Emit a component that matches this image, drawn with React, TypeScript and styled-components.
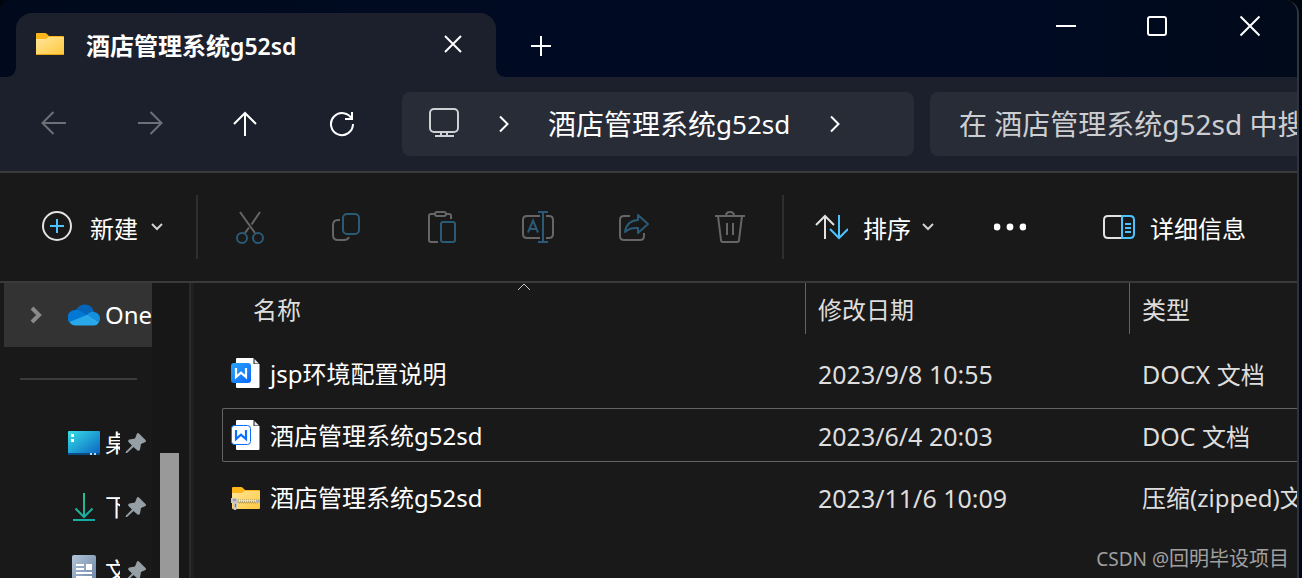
import React from "react";
import styled, { createGlobalStyle, css } from "styled-components";

const GlobalStyle = createGlobalStyle`
  * { box-sizing: border-box; }
  html, body { margin: 0; height: 100%; background: #00081a; overflow: hidden; }
  body, button, input {
    font-family: "Noto Sans", "Noto Sans CJK SC", sans-serif;
    color: #ffffff;
  }
  button { background: none; border: 0; padding: 0; margin: 0; display: flex; align-items: center; }
  svg { display: block; flex: none; }
`;

const Desktop = styled.div`
  height: 100vh;
  padding-right: 3px;
  background: linear-gradient(#00060f, #00081c);
`;

const Window = styled.main`
  position: relative;
  height: 100%;
  display: flex;
  flex-direction: column;
  overflow: hidden;
  background: #191919;
  border-right: 2px solid #2f333c;
  border-radius: 12px 14px 0 0;
`;

const TitleBar = styled.header`
  display: flex;
  align-items: flex-end;
  height: 77px;
  flex: none;
  padding-left: 16px;
  background: linear-gradient(90deg, #000a1c, #000a22 40%, #000a22 80%, #000a1a);
`;

const Tab = styled.div`
  position: relative;
  display: flex;
  align-items: center;
  width: 480px;
  height: 64px;
  padding: 0 33px 2px 20px;
  border-radius: 16px 16px 0 0;
  background: #1b202c;
  &::before, &::after {
    content: "";
    position: absolute;
    bottom: 0;
    width: 8px;
    height: 8px;
  }
  &::before {
    left: -8px;
    background: radial-gradient(circle at 0 0, transparent 7px, #1b202c 8px);
  }
  &::after {
    right: -8px;
    background: radial-gradient(circle at 100% 0, transparent 7px, #1b202c 8px);
  }
`;

const TabTitle = styled.h1`
  flex: 1;
  margin: 0 0 0 22px;
  padding-top: 3px;
  font-size: 24px;
  line-height: 32px;
  font-weight: 700;
  white-space: nowrap;
`;

const Latin = styled.span<{ $size: number; $weight?: number }>`
  font-size: ${(p) => p.$size}px;
  font-weight: ${(p) => p.$weight ?? 400};
`;

const NewTab = styled.button`
  align-self: center;
  padding: 14px 0 0 34px;
`;

const Controls = styled.div`
  display: flex;
  align-self: flex-start;
  gap: 70px;
  margin-left: auto;
  padding: 15px 36px 0 0;
`;

const NavBar = styled.nav`
  display: flex;
  align-items: center;
  flex: none;
  height: 96px;
  padding-left: 38px;
  background: #1b202c;
  border-bottom: 2px solid #3a3a3d;
`;

const NavButtons = styled.div`
  display: flex;
  gap: 64px;
  margin-right: 44px;
`;

const field = css`
  height: 64px;
  border-radius: 8px;
  background: #272c37;
`;

const AddressBar = styled.div`
  ${field}
  display: flex;
  align-items: center;
  flex: 1;
  min-width: 0;
  padding-left: 26px;
`;

const Crumb = styled.button`
  margin: 0 40px 0 39px;
  font-size: 28px;
  line-height: 40px;
  white-space: nowrap;
`;

const CrumbArrow = styled.span`
  margin-left: 39px;
`;

const SearchBox = styled.input`
  ${field}
  flex: none;
  width: 367px;
  margin-left: 16px;
  padding: 0 0 0 29px;
  border: 0;
  border-radius: 8px 0 0 8px;
  outline: 0;
  font-size: 28px;
  &::placeholder { color: #cdced1; opacity: 1; }
`;

const Toolbar = styled.div`
  display: flex;
  align-items: center;
  flex: none;
  height: 110px;
  padding: 0 51px 0 40px;
  border-bottom: 2px solid #3a3a3a;
`;

const ToolSection = styled.div<{ $before?: number; $after?: number }>`
  margin: 0 ${(p) => p.$after ?? 0}px 0 ${(p) => p.$before ?? 0}px;
`;

const DetailsArea = styled.div`
  margin-left: auto;
`;

const LabelButton = styled.button<{ $gap: number }>`
  gap: ${(p) => p.$gap}px;
  font-size: 24px;
  line-height: 36px;
  white-space: nowrap;
`;

const ButtonText = styled.span`
  padding-top: 3px;
`;

const Chevron = styled.span`
  margin-left: -4px;
`;

const Rule = styled.span`
  width: 2px;
  height: 64px;
  background: #2e2e2e;
`;

const IconGroup = styled.div`
  display: flex;
  gap: 62px;
  margin: 0 35px;
`;

const Body = styled.div`
  display: flex;
  flex: 1;
  min-height: 0;
`;

const Sidebar = styled.aside`
  display: flex;
  flex: none;
  width: 194px;
  padding-left: 4px;
  border-right: 3px solid #1f1f1f;
  background: #191919;
  overflow: hidden;
`;

const Tree = styled.div`
  width: 148px;
  overflow: hidden;
  font-size: 24px;
  line-height: 36px;
`;

const CloudItem = styled.a`
  display: flex;
  align-items: center;
  height: 64px;
  padding-left: 25px;
  background: #333333;
  color: #ffffff;
  text-decoration: none;
  white-space: nowrap;
`;

const CloudIcon = styled.span`
  margin: 0 5px 0 25px;
`;

const Divider = styled.hr`
  width: 117px;
  height: 2px;
  margin: 31px 0 31px 16px;
  border: 0;
  background: #3c3c3c;
`;

const PinnedItem = styled.a`
  display: flex;
  align-items: center;
  height: 64px;
  padding-left: 64px;
  color: #ffffff;
  text-decoration: none;
`;

const PinnedName = styled.span`
  width: 15px;
  margin: 0 5px;
  overflow: hidden;
  white-space: nowrap;
`;

const ScrollTrack = styled.div`
  display: flex;
  flex: 1;
  padding: 170px 0 0 8px;
  background: #171717;
  border-right: 2px solid #2a2a2a;
`;

const ScrollThumb = styled.div`
  width: 19px;
  background: #999999;
`;

const Files = styled.section`
  flex: 1;
  min-width: 0;
  padding-left: 28px;
  overflow: hidden;
`;

const Table = styled.table`
  width: 100%;
  table-layout: fixed;
  border-collapse: separate;
  border-spacing: 0;
  font-size: 24px;
  line-height: 36px;
  white-space: nowrap;
`;

const Head = styled.th<{ $divided?: boolean; $width?: string }>`
  position: relative;
  width: ${(p) => p.$width ?? "auto"};
  height: 51px;
  padding: 2px 0 0 ${(p) => (p.$divided ? 12 : 31)}px;
  border-left: ${(p) => (p.$divided ? "1px solid #636363" : "0")};
  text-align: left;
  font-weight: 400;
  color: #dedede;
`;

const SortMark = styled.span`
  position: absolute;
  inset: 0 0 auto 20px;
  display: flex;
  justify-content: center;
`;

const Gap = styled.tr`
  height: 12px;
`;

const Spacer = styled.tr`
  height: 8px;
`;

const Cell = styled.td<{ $selected?: boolean; $size?: number }>`
  height: 54px;
  padding: 2px 0 0 13px;
  overflow: hidden;
  font-size: ${(p) => p.$size ?? 24}px;
  color: #dedede;
  border: 0 solid ${(p) => (p.$selected ? "#636363" : "transparent")};
  border-width: 1px 0;
  &:first-child {
    padding-left: 8px;
    border-left-width: 1px;
    border-radius: 2px 0 0 2px;
    color: #ffffff;
  }
`;

const FileName = styled.span`
  display: flex;
  align-items: center;
  gap: 9px;
`;

const Watermark = styled.p`
  position: absolute;
  right: 8px;
  bottom: 4px;
  margin: 0;
  font-size: 20px;
  line-height: 30px;
  color: #a0a0a0;
  white-space: nowrap;
`;

const GREY = "#666666";
const TEAL = "#2a5a75";
const BLUE = "#4cc2ff";

type IconProps = { w: number; h: number; color?: string; sw?: number; children: React.ReactNode };

const Icon = ({ w, h, color = "#ffffff", sw = 2, children }: IconProps) => (
  <svg width={w} height={h} viewBox={`0 0 ${w} ${h}`} fill="none" stroke={color} strokeWidth={sw} aria-hidden="true">
    {children}
  </svg>
);

const FolderIcon = () => (
  <svg width="28" height="24" viewBox="0 0 28 24" aria-hidden="true">
    <defs>
      <linearGradient id="folder" x1="0" y1="0" x2="1" y2="1">
        <stop offset="0" stopColor="#ffe69c" />
        <stop offset="1" stopColor="#ffc83a" />
      </linearGradient>
    </defs>
    <path d="M0 2Q0 1 1 1H9Q10 1 11 2L13 4H27Q28 4 28 5V12H0Z" fill="#fcb51a" />
    <path d="M0 7H10L12.5 5H28V22Q28 23 27 23H1Q0 23 0 22Z" fill="url(#folder)" />
    <path d="M0 21.5V22Q0 23 1 23H27Q28 23 28 22V21.5Q28 22 27 22H1Q0 22 0 21.5Z" fill="#e9a416" />
  </svg>
);

const ZipIcon = () => (
  <svg width="30" height="32" viewBox="0 0 30 32" aria-hidden="true">
    <g transform="translate(0 4)">
      <path d="M1 2Q1 1 2 1H10Q11 1 12 2L14 4H28Q29 4 29 5V12H1Z" fill="#fcb51a" />
      <path d="M1 7H11L13.5 5H29V22Q29 23 28 23H2Q1 23 1 22Z" fill="url(#folder)" />
      <path d="M7 14H28M8 17H28" stroke="#a39468" strokeDasharray="1 1" />
      <path d="M7 15H28" stroke="#f4efdf" />
      <path d="M7 16H28" stroke="#6f6a5c" strokeDasharray="1 1" />
      <rect x="25" y="14" width="4" height="3" fill="#b4b4b4" />
      <path d="M0 12H5L7 14V17H6V22L5 24H3L2 22V17H0Z" fill="#c5c5c3" />
      <path d="M2 14H5M4.500 18V21" stroke="#77736c" />
    </g>
  </svg>
);

const DocIcon = ({ solid }: { solid?: boolean }) => (
  <svg width="30" height="32" viewBox="0 0 30 32" aria-hidden="true">
    <defs>
      <linearGradient id="docx" x1="0" y1="0" x2="1" y2="1">
        <stop offset="0" stopColor="#2ba5fb" />
        <stop offset="1" stopColor="#0968fb" />
      </linearGradient>
    </defs>
    <path d="M5 1Q5 0 6 0H22.5V6H28.5V29Q28.5 30 27.500 30H6Q5 30 5 29Z" fill="#ffffff" />
    <path d="M23.5 1L28 5.500H23.5Z" fill="#e7eaf2" />
    {solid ? (
      <rect x="0" y="5" width="20" height="20" rx="3" fill="url(#docx)" />
    ) : (
      <rect x="0.5" y="5.5" width="19" height="19" rx="3" fill="#ffffff" stroke="#0d6efd" />
    )}
    <path
      d="M5 10V19L10 14.6L15 19V10"
      fill="none"
      stroke={solid ? "#ffffff" : "#0d6efd"}
      strokeWidth="2.2"
    />
  </svg>
);

const ChevronRight = () => (
  <Icon w={10} h={18}><path d="M1 1.5L8.5 9L1 16.5" /></Icon>
);

const ChevronDown = () => (
  <Icon w={12} h={8} color="#d0d0d0"><path d="M1 1L6 6L11 1" /></Icon>
);

const CloudLogo = () => (
  <svg width="32" height="22" viewBox="0 0 32 22" aria-hidden="true">
    <path d="M7 8C9 3 12.5 0.5 17 0.5C21.5 0.5 25 3.5 26 8L19 13Z" fill="#0364b8" />
    <path d="M7 21A7.5 7.5 0 0 1 7 6Q9.500 5.500 11.5 6.5L20 11.5L8 21Z" fill="#0078d4" />
    <path d="M19 11C21 8 24 7.5 26 8C29.5 8.5 32 11 32 14.5C32 16 31.5 17.5 31 18Z" fill="#1490df" />
    <path d="M1.500 18L19.3 10.8L31 18C30 20.5 28 21.5 25.5 21.5H7.5C5 21.5 3 20.500 1.500 18Z" fill="#28a8ea" />
  </svg>
);

const DesktopIcon = () => (
  <svg width="32" height="24" viewBox="0 0 32 24" aria-hidden="true">
    <defs>
      <linearGradient id="desk" x1="0" y1="0" x2="1" y2="1">
        <stop offset="0" stopColor="#37dfe8" />
        <stop offset="1" stopColor="#0a61c0" />
      </linearGradient>
    </defs>
    <rect width="32" height="24" rx="1" fill="url(#desk)" />
    <path d="M0 22H32V23Q32 24 31 24H1Q0 24 0 23Z" fill="#0b4b83" />
    <path d="M3 3H6V6H3ZM3 8H6V11H3Z" fill="#ffffff" />
    <path d="M22 22H24V24H22ZM26 22H28V24H26Z" fill="#b9d8ef" />
  </svg>
);

const DownloadIcon = () => (
  <svg width="32" height="28" viewBox="0 0 32 28" fill="none" strokeWidth="2" aria-hidden="true">
    <defs>
      <linearGradient id="down" gradientUnits="userSpaceOnUse" x1="5" y1="0" x2="27" y2="28">
        <stop offset="0" stopColor="#33c481" />
        <stop offset="1" stopColor="#0fa3ac" />
      </linearGradient>
    </defs>
    <path d="M16 0V24M7.5 15.5L16 24L24.5 15.5M5 27H27" stroke="url(#down)" />
  </svg>
);

const DocumentsIcon = () => (
  <svg width="32" height="32" viewBox="0 0 32 32" aria-hidden="true">
    <defs>
      <linearGradient id="docs" x1="0" y1="0" x2="1" y2="1">
        <stop offset="0" stopColor="#b3c5d9" />
        <stop offset="1" stopColor="#6580a1" />
      </linearGradient>
    </defs>
    <rect x="4" width="24" height="32" rx="2" fill="url(#docs)" />
    <path d="M8 10H16M8 14H16M8 18H24M8 22H24" stroke="#ffffff" strokeWidth="2" />
    <rect x="18" y="9" width="6" height="6" fill="#ffffff" />
  </svg>
);

const PinIcon = () => (
  <svg width="22" height="22" viewBox="0 0 22 22" aria-hidden="true">
    <path d="M12 1.5Q13 0.5 14 1.5L20.5 8Q21.5 9 20.5 10L16 12L15 17.5Q14 19.5 12.5 18.5L8.5 15L2 21L0.5 21L1 19.5L7 13.5L3.5 10Q2.5 8 4.5 7.5L10 6.5Z" fill="#959fa6" />
  </svg>
);

const pinned = [
  { name: "桌面", icon: <DesktopIcon /> },
  { name: "下载", icon: <DownloadIcon /> },
  { name: "文档", icon: <DocumentsIcon /> },
];

const files = [
  { name: "jsp环境配置说明", date: "2023/9/8 10:55", type: <><Latin $size={25}>DOCX </Latin>文档</>, icon: <DocIcon solid /> },
  { name: "酒店管理系统g52sd", date: "2023/6/4 20:03", type: <><Latin $size={25}>DOC </Latin>文档</>, icon: <DocIcon />, selected: true },
  { name: "酒店管理系统g52sd", date: "2023/11/6 10:09", type: "压缩(zipped)文件夹", icon: <ZipIcon /> },
];

export default function App() {
  return (
    <Desktop>
      <GlobalStyle />
      <Window>
        <TitleBar>
          <Tab>
            <FolderIcon />
            <TabTitle>酒店管理系统<Latin $size={23} $weight={600}>g52sd</Latin></TabTitle>
            <button aria-label="关闭标签页">
              <Icon w={20} h={20}><path d="M2 2L18 18M18 2L2 18" /></Icon>
            </button>
          </Tab>
          <NewTab aria-label="新建标签页">
            <Icon w={22} h={22}><path d="M11 1V21M1 11H21" /></Icon>
          </NewTab>
          <Controls>
            <button aria-label="最小化"><Icon w={22} h={22}><path d="M1 11H21" /></Icon></button>
            <button aria-label="最大化"><Icon w={22} h={22}><rect x="1" y="2" width="18" height="18" rx="2" /></Icon></button>
            <button aria-label="关闭"><Icon w={22} h={22}><path d="M1.5 1.5L20.5 20.5M20.5 1.5L1.5 20.5" /></Icon></button>
          </Controls>
        </TitleBar>

        <NavBar>
          <NavButtons>
            <button aria-label="后退"><Icon w={32} h={26} color="#6c7078"><path d="M28 12H5M15.5 1L4.5 12L15.5 23" /></Icon></button>
            <button aria-label="前进"><Icon w={32} h={26} color="#6c7078"><path d="M4 12H27M16.5 1L27.5 12L16.5 23" /></Icon></button>
            <button aria-label="向上"><Icon w={32} h={26}><path d="M15 25V2M4 13L15 2L26 13" /></Icon></button>
            <button aria-label="刷新"><Icon w={32} h={26}><path d="M26 8.500A11 11 0 1 0 27 13M26 1V8H19" /></Icon></button>
          </NavButtons>
          <AddressBar>
            <Icon w={32} h={32} color="#cfd0d3">
              <rect x="2" y="1" width="28" height="23" rx="4" />
              <path d="M13 24V28M19 24V28M7 28H26" />
            </Icon>
            <CrumbArrow><ChevronRight /></CrumbArrow>
            <Crumb>酒店管理系统<Latin $size={26}>g52sd</Latin></Crumb>
            <ChevronRight />
          </AddressBar>
          <SearchBox aria-label="搜索" placeholder="在 酒店管理系统g52sd 中搜索" />
        </NavBar>

        <Toolbar>
          <ToolSection $after={33}>
            <LabelButton $gap={17}>
              <Icon w={33} h={32} color="#e2e2e2">
                <circle cx="17" cy="15" r="14" />
                <path d="M10 15H24M17 8V22" stroke={BLUE} />
              </Icon>
              <ButtonText>新建</ButtonText>
              <Chevron><ChevronDown /></Chevron>
            </LabelButton>
          </ToolSection>
          <Rule />
          <IconGroup>
            <button aria-label="剪切">
              <Icon w={34} h={34} color={GREY}>
                <path d="M7 2L22 23M27 2L18.5 14.5M16 17.5L12 23" />
                <circle cx="9" cy="28" r="5" stroke={TEAL} />
                <circle cx="25" cy="28" r="5" stroke={TEAL} />
              </Icon>
            </button>
            <button aria-label="复制">
              <Icon w={34} h={34} color={GREY}>
                <path d="M11 10H9Q4 10 4 15V25Q4 30 9 30H15Q19 30 20 27" />
                <rect x="14" y="4" width="16" height="20" rx="4" stroke={TEAL} />
              </Icon>
            </button>
            <button aria-label="粘贴">
              <Icon w={34} h={34} color={GREY}>
                <path d="M13 32H6Q4 32 4 30V6Q4 4 6 4H10M21 4H24Q26 4 26 6V9" />
                <rect x="10" y="2" width="11" height="4" rx="2" />
                <rect x="16" y="12" width="14" height="20" rx="2" stroke={TEAL} />
              </Icon>
            </button>
            <button aria-label="重命名">
              <Icon w={34} h={34} color={GREY}>
                <path d="M19 6H6Q2 6 2 10V24Q2 28 6 28H19M25 6H28Q32 6 32 10V24Q32 28 28 28H25" />
                <path d="M7 22.5L12 10.5L17 22.5M9 19H15M22 2V32M17 2H27M17 32H27" stroke={TEAL} />
              </Icon>
            </button>
            <button aria-label="共享">
              <Icon w={34} h={34} color={GREY}>
                <path d="M13 6H7Q3 6 3 10V26Q3 30 7 30H23Q27 30 27 26V23" />
                <path d="M21 5L31 14L21 23V18C15 17.5 11 19 8 22C9 15 13 10.5 21 10Z" stroke={TEAL} strokeLinejoin="round" />
              </Icon>
            </button>
            <button aria-label="删除">
              <Icon w={34} h={34} color={GREY}>
                <path d="M2 6H32M5 6L8 30Q8 32 10 32H24Q26 32 26 30L29 6M13 6Q13 2 17 2Q21 2 21 6M14 13V25M20 13V25" />
              </Icon>
            </button>
          </IconGroup>
          <Rule />
          <ToolSection $before={31} $after={60}>
            <LabelButton $gap={15}>
              <Icon w={33} h={28} color="#e2e2e2">
                <path d="M10 26V3M1 12L10 3L19 12" />
                <path d="M24 2V25M15 16L24 25L33 16" stroke={BLUE} />
              </Icon>
              <ButtonText>排序</ButtonText>
              <Chevron><ChevronDown /></Chevron>
            </LabelButton>
          </ToolSection>
          <button aria-label="更多">
            <Icon w={32} h={8}>
              <g fill="#ffffff" stroke="none">
                <circle cx="3" cy="4" r="3.4" />
                <circle cx="16" cy="4" r="3.4" />
                <circle cx="29" cy="4" r="3.4" />
              </g>
            </Icon>
          </button>
          <DetailsArea>
            <LabelButton $gap={15}>
              <Icon w={32} h={24} color="#e2e2e2">
                <path d="M19 1H5Q1 1 1 5V19Q1 23 5 23H19" />
                <path d="M19 1H27Q31 1 31 5V19Q31 23 27 23H19ZM22 9H28M22 13H28M22 17H28" stroke={BLUE} />
              </Icon>
              <ButtonText>详细信息</ButtonText>
            </LabelButton>
          </DetailsArea>
        </Toolbar>

        <Body>
          <Sidebar>
            <Tree>
              <CloudItem href="#onedrive">
                <Icon w={14} h={18} color="#8a8a8a" sw={4}><path d="M3 2L10 9L3 16" /></Icon>
                <CloudIcon><CloudLogo /></CloudIcon>
                OneDrive
              </CloudItem>
              <Divider />
              {pinned.map((item) => (
                <PinnedItem key={item.name} href={`#${item.name}`}>
                  {item.icon}
                  <PinnedName>{item.name}</PinnedName>
                  <PinIcon />
                </PinnedItem>
              ))}
            </Tree>
            <ScrollTrack><ScrollThumb /></ScrollTrack>
          </Sidebar>
          <Files>
            <Table>
              <thead>
                <tr>
                  <Head>
                    名称
                    <SortMark><Icon w={14} h={8} color="#c8c8c8" sw={1}><path d="M1 7L7 1L13 7" /></Icon></SortMark>
                  </Head>
                  <Head $divided $width="324px">修改日期</Head>
                  <Head $divided $width="168px">类型</Head>
                </tr>
              </thead>
              <tbody>
                <Gap />
                {files.map((file) => (
                  <React.Fragment key={file.date}>
                    <tr>
                      <Cell $selected={file.selected}><FileName>{file.icon}{file.name}</FileName></Cell>
                      <Cell $selected={file.selected} $size={25}>{file.date}</Cell>
                      <Cell $selected={file.selected}>{file.type}</Cell>
                    </tr>
                    <Spacer />
                  </React.Fragment>
                ))}
              </tbody>
            </Table>
          </Files>
        </Body>
        <Watermark><Latin $size={19}>CSDN @</Latin>回明毕设项目</Watermark>
      </Window>
    </Desktop>
  );
}
